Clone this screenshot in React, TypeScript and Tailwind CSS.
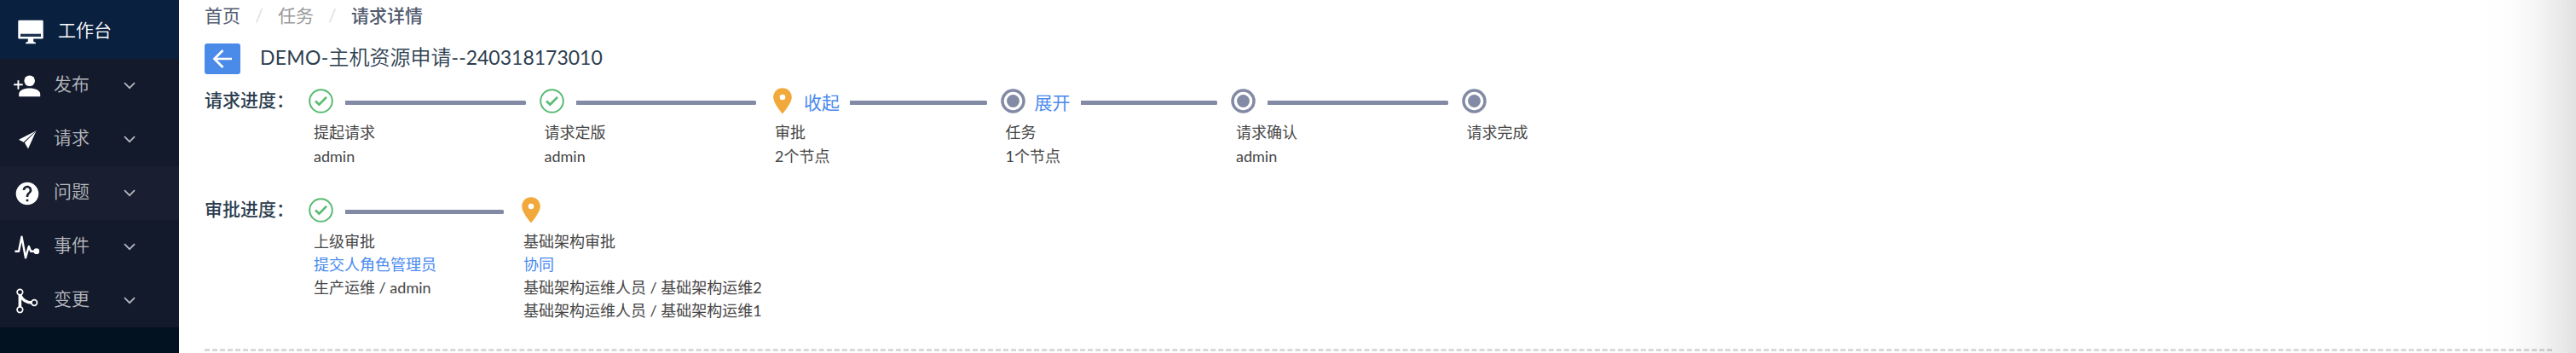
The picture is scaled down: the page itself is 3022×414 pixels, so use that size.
import React from "react";
import { MdHelp } from "react-icons/md";

type StepState = "done" | "current" | "pending";

interface Step {
  title: string;
  state: StepState;
  detail?: string;
  action?: string;
}

const steps: Step[] = [
  { title: "提起请求", state: "done", detail: "admin" },
  { title: "请求定版", state: "done", detail: "admin" },
  { title: "审批", state: "current", detail: "2个节点", action: "收起" },
  { title: "任务", state: "pending", detail: "1个节点", action: "展开" },
  { title: "请求确认", state: "pending", detail: "admin" },
  { title: "请求完成", state: "pending" },
];

function MonitorIcon() {
  return (
    <svg width="30" height="29" viewBox="0 0 30 29" fill="#fff">
      <rect x="0.3" y="0.7" width="29.4" height="21.8" rx="1.3" />
      <path d="M11.8 22h6.4v3.7l2.8 1.4v1.2H9v-1.2l2.8-1.4z" />
      <rect x="3" y="16.7" width="24" height="3.3" fill="#1d3350" />
    </svg>
  );
}

function PersonAddIcon() {
  return (
    <svg width="32" height="26" viewBox="0 0 32 26" fill="#fff">
      <path d="M4.5 6.3h1.9v4h4.3v2H6.4v4.400H4.5v-4.400H0.2v-2h4.300z" />
      <circle cx="18.7" cy="6.8" r="6.3" />
      <path d="M6.2 25.3v-3C6.2 18 12 15.5 18.7 15.5S31.2 18 31.2 22.3v3z" />
    </svg>
  );
}

function PlaneIcon() {
  return (
    <svg width="21" height="22" viewBox="0 0 21 22" fill="#fff">
      <path d="M20.6 0.3L0 10.7l5.6 3.1z" />
      <path d="M20.6 0.3L6.8 14.2 11 21.5z" />
      <path d="M19.5 1.5L6.3 14" stroke="#131a2c" strokeWidth="0.7" />
    </svg>
  );
}

function PulseIcon() {
  return (
    <svg width="30" height="28" viewBox="0 0 30 28" fill="none">
      <path
        d="M0.5 18.7H5L8.5 1.8L13 26.3L16.8 13L19.2 18.7H25"
        stroke="#fff"
        strokeWidth="2.4"
        strokeLinejoin="round"
      />
      <circle cx="25.8" cy="18.7" r="3.4" fill="#fff" />
    </svg>
  );
}

function BranchIcon() {
  return (
    <svg width="26" height="30" viewBox="0 0 26 30" fill="none" stroke="#fff">
      <path d="M4.4 8V22" strokeWidth="3.6" />
      <path d="M4.5 8C7.5 14 12 17 18 17" strokeWidth="3.4" />
      <circle cx="4.4" cy="4.6" r="3.3" strokeWidth="1.7" fill="#131a2c" />
      <circle cx="4.4" cy="25.2" r="3.3" strokeWidth="1.7" fill="#131a2c" />
      <circle cx="21.2" cy="17" r="3.3" strokeWidth="1.7" fill="#131a2c" />
    </svg>
  );
}

function Chevron() {
  return (
    <svg width="14" height="9" viewBox="0 0 14 9" fill="none">
      <path d="M1 1.2L7 7.2L13 1.2" stroke="#b6b9bf" strokeWidth="1.7" />
    </svg>
  );
}

function DoneIcon() {
  return (
    <svg width="29" height="29" viewBox="0 0 29 29" fill="none" stroke="#57bb71">
      <circle cx="14.5" cy="14.5" r="13.3" strokeWidth="2" />
      <path d="M8 14.6L12.4 18.7L21 9.9" strokeWidth="2.7" />
    </svg>
  );
}

function PendingIcon() {
  return (
    <svg width="29" height="29" viewBox="0 0 29 29" fill="none">
      <circle cx="14.5" cy="14.5" r="12.5" stroke="#828aa5" strokeWidth="3.5" />
      <circle cx="14.5" cy="14.5" r="7.4" fill="#828aa5" />
    </svg>
  );
}

function PinIcon() {
  return (
    <svg className="ml-[4px]" width="22" height="31" viewBox="0 0 22 31" fill="#f1a93b">
      <path
        fillRule="evenodd"
        d="M11 0.3C4.9 0.3 0.2 5 0.2 11C0.2 18.5 11 30.5 11 30.5C11 30.5 21.8 18.5 21.8 11C21.8 5 17.1 0.3 11 0.3ZM11 7.7a3.3 3.3 0 1 1 0 6.6a3.3 3.3 0 0 1 0-6.6Z"
      />
    </svg>
  );
}

function StateIcon({ state }: { state: StepState }) {
  if (state === "done") return <DoneIcon />;
  if (state === "current") return <PinIcon />;
  return <PendingIcon />;
}

function Connector() {
  return <div className="mt-[3px] h-[5px] flex-1 rounded-r-[1.5px] bg-[#828aa5]" />;
}

const menu = [
  { label: "发布", icon: <PersonAddIcon />, pad: "pl-[16px]", row: "" },
  { label: "请求", icon: <PlaneIcon />, pad: "pl-[21.5px]", row: "" },
  { label: "问题", icon: <MdHelp size={32} color="#fff" />, pad: "pl-[15.5px]", row: "bg-[#191f30]" },
  { label: "事件", icon: <PulseIcon />, pad: "pl-[16.5px]", row: "" },
  { label: "变更", icon: <BranchIcon />, pad: "pl-[18.5px]", row: "" },
];

function Sidebar() {
  return (
    <nav className="flex w-[210px] shrink-0 flex-col bg-[#021220] text-[21px] font-[350]">
      <div className="flex h-[69px] items-center bg-[#0a203f] pt-[6px] text-white">
        <div className="flex w-[68px] pl-[21px]">
          <MonitorIcon />
        </div>
        <span className="pb-[5px] leading-[30px]">工作台</span>
      </div>
      <div className="bg-[#131a2c] text-[#b6b9bf]">
        {menu.map((item) => (
          <div key={item.label} className={`flex h-[63px] items-center ${item.row}`}>
            <div className={`flex w-[63px] ${item.pad}`}>{item.icon}</div>
            <span className="w-[82px] pb-[5px] leading-[30px]">{item.label}</span>
            <Chevron />
          </div>
        ))}
      </div>
    </nav>
  );
}

function Breadcrumb() {
  return (
    <div className="flex h-[37px] items-center pb-[2px] text-[21px] leading-[35px] text-[#515a6e]">
      <span>首页</span>
      <span className="w-[44px] text-center text-[#dcdee2]">/</span>
      <span className="text-[#999]">任务</span>
      <span className="w-[44px] text-center text-[#dcdee2]">/</span>
      <span className="font-medium">请求详情</span>
    </div>
  );
}

export default function App() {
  return (
    <div className="relative flex h-[414px] w-[3022px] overflow-hidden bg-white font-['Lato','Noto_Sans_CJK_SC',sans-serif] text-[#464c5b]">
      <Sidebar />
      <main className="flex w-[2784px] flex-col pl-[30px]">
        <Breadcrumb />
        <div className="mt-[14px] flex h-[36px] items-center">
          <button className="flex h-[36px] w-[42px] items-center justify-center rounded-[3px] bg-[#4a8ae9]">
            <svg width="24" height="24" viewBox="0 0 24 24" fill="none" stroke="#fff" strokeWidth="2.7">
              <path d="M12.5 2L2.5 12L12.5 22M2.5 12H23" />
            </svg>
          </button>
          <h1 className="ml-[23px] pb-[4px] text-[24px] leading-[32px] text-[#2c3e50]">
            <span className="text-[23px] tracking-[0.3px]">DEMO-</span>
            <span className="font-[350]">主机资源申请</span>
            <span className="text-[23px]">--240318173010</span>
          </h1>
        </div>

        <section className="flex h-[130px] pt-[16px]">
          <div className="w-[122px] text-[21px] font-medium leading-[28px] text-[#2c3e50]">请求进度：</div>
          {steps.map((step, i) => (
            <div key={step.title} className="w-[270.5px]">
              <div className="flex h-[31px] items-center pr-[16px]">
                <div className="w-[43px] shrink-0">
                  <StateIcon state={step.state} />
                </div>
                {step.action && (
                  <span className="-ml-[3px] mr-[12px] mt-[3px] text-[21px] leading-[28px] text-[#4a8af0]">
                    {step.action}
                  </span>
                )}
                {i < steps.length - 1 && <Connector />}
              </div>
              <div className="pl-[6px] pt-[7px] text-[18px] leading-[28px] text-[#464646]">
                <p>{step.title}</p>
                <p>{step.detail}</p>
              </div>
            </div>
          ))}
        </section>

        <section className="flex h-[192px] pt-[14px]">
          <div className="w-[122px] text-[21px] font-medium leading-[28px] text-[#2c3e50]">审批进度：</div>
          <div className="w-[246px]">
            <div className="flex h-[31px] items-center pr-[17px]">
              <div className="w-[43px] shrink-0">
                <DoneIcon />
              </div>
              <Connector />
            </div>
            <div className="pl-[6px] pt-[8px] text-[18px] leading-[27px] text-[#464646]">
              <p>上级审批</p>
              <p className="text-[#4a8af0]">提交人角色管理员</p>
              <p>生产运维 / admin</p>
            </div>
          </div>
          <div>
            <div className="flex h-[31px] items-center">
              <PinIcon />
            </div>
            <div className="pl-[6px] pt-[8px] text-[18px] leading-[27px] text-[#464646]">
              <p>基础架构审批</p>
              <p className="text-[#4a8af0]">协同</p>
              <p>基础架构运维人员 / 基础架构运维2</p>
              <p>基础架构运维人员 / 基础架构运维1</p>
            </div>
          </div>
        </section>
        <div className="border-t-[3px] border-dashed border-[#d9d9d9]" />
      </main>
      <div className="absolute inset-y-0 right-0 w-[110px] bg-[linear-gradient(to_right,rgba(0,0,0,0)_0%,rgba(0,0,0,0.008)_30%,rgba(0,0,0,0.035)_55%,rgba(0,0,0,0.075)_78%,rgba(0,0,0,0.115)_100%)]" />
    </div>
  );
}
